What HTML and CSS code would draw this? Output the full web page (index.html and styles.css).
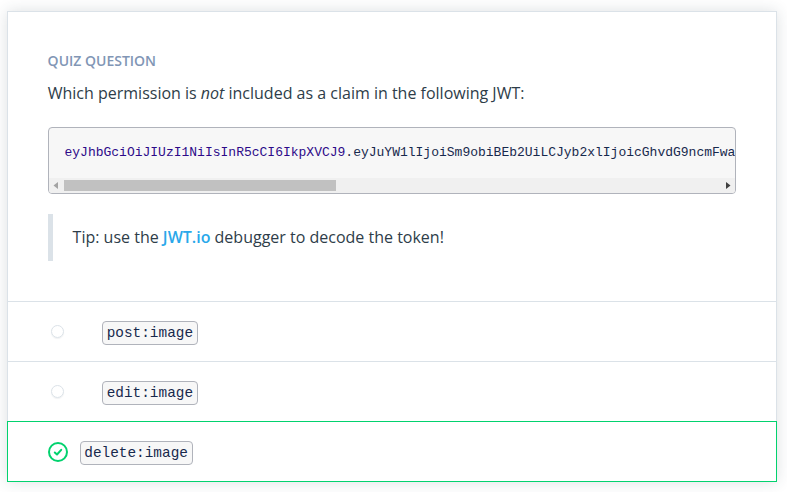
FILE: index.html
```
<!DOCTYPE html>
<html lang="en">
<head>
<meta charset="utf-8">
<title>Quiz Question</title>
<link rel="stylesheet" href="styles.css">
</head>
<body>
<main class="card">
  <section class="question">
    <h1 class="label">QUIZ QUESTION</h1>
    <p class="prompt">Which permission is <em>not</em> included as a claim in the following JWT:</p>
    <div class="code-box">
      <pre class="token"><span class="token-header">eyJhbGciOiJIUzI1NiIsInR5cCI6IkpXVCJ9</span>.eyJuYW1lIjoiSm9obiBEb2UiLCJyb2xlIjoicGhvdG9ncmFwa</pre>
      <div class="scrollbar">
        <svg class="arrow" width="15" height="15" viewBox="0 0 15 15"><path d="M9 4v7L4.5 7.5z" fill="#a3a3a3"/></svg>
        <div class="track"><div class="thumb"></div></div>
        <svg class="arrow" width="15" height="15" viewBox="0 0 15 15"><path d="M6 4v7l4.5-3.5z" fill="#404040"/></svg>
      </div>
    </div>
    <blockquote class="tip">Tip: use the <a class="link">JWT.io</a> debugger to decode the token!</blockquote>
  </section>
  <div class="option"><span class="radio"></span><code class="permission">post:image</code></div>
  <div class="option"><span class="radio"></span><code class="permission">edit:image</code></div>
  <div class="option selected">
    <svg class="check" width="20" height="20" viewBox="0 0 20 20" fill="none" stroke="#02d26e" stroke-width="2"><circle cx="10" cy="10" r="9"/><path d="M6.8 10.5l2.2 2 4.2-4.7" stroke-linecap="round" stroke-linejoin="round"/></svg>
    <code class="permission">delete:image</code>
  </div>
</main>
</body>
</html>
```
FILE: styles.css
```
* { box-sizing: border-box; }
body {
  margin: 0;
  padding: 11px 10px 10px 7px;
  background: #fff;
  color: #2e3d49;
  font: 16px/24px "Open Sans", sans-serif;
  overflow: hidden;
}
.card {
  width: 770px;
  height: 471px;
  border: 1px solid #dbe2e8;
  background: #fff;
  box-shadow: 0 0 14px rgba(46, 61, 73, 0.16);
}
.question { height: 289px; padding: 37px 40px 0; }
.label {
  margin: 0 0 0 -0.4px;
  color: #8196b5;
  font-size: 14px;
  line-height: 24px;
  font-weight: 600;
}
.prompt { margin: 8px 0 22px -0.3px; }
.code-box {
  height: 67px;
  border: 1px solid #b0b3bb;
  border-radius: 4px;
  background: #f7f7f7;
  overflow: hidden;
}
.token {
  height: 50px;
  margin: 0;
  padding: 16px 0 0 15.5px;
  color: #17294d;
  font: 13px/18px "Liberation Mono", monospace;
  overflow: hidden;
}
.token-header { color: #2d0a89; }
.scrollbar { display: flex; height: 15px; background: #f0f0f0; }
.arrow { flex: none; }
.track { flex: 1; padding: 2px 0; }
.thumb { width: 272px; height: 11px; background: #c1c1c1; }
.tip {
  height: 47px;
  margin: 20px 0 0;
  padding: 11px 0 0 19.6px;
  border-left: 5px solid #dbe2e8;
}
.link { color: #2aa8ea; font-weight: 600; }
.option {
  display: flex;
  align-items: center;
  height: 60px;
  padding: 2px 0 0 43px;
  border-top: 1px solid #dbe2e8;
}
.radio {
  width: 13px;
  height: 13px;
  margin: -2px 37.7px 0 0;
  border: 1px solid #dbe2e8;
  border-radius: 50%;
  box-shadow: 0 1px 1px rgba(46, 61, 73, 0.08);
}
.permission {
  height: 24px;
  padding: 0 4px;
  border: 1px solid #b0b3bb;
  border-radius: 4px;
  background: #f7f7f7;
  color: #17294d;
  font: 14.4px/22px "Liberation Mono", monospace;
}
.selected {
  height: 61px;
  margin: 0 -1px;
  padding: 3px 0 0 40px;
  border: 1px solid #02d26e;
}
.check { margin: -2px 11.6px 0 0; }
.selected .permission { padding: 0 3.7px; }
```
